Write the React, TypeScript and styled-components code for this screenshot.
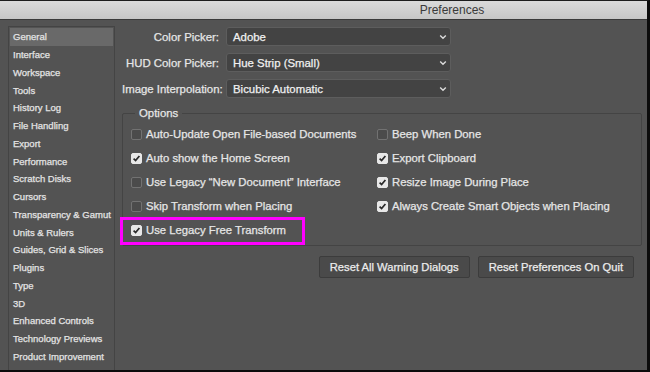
import React from "react";
import styled, { createGlobalStyle } from "styled-components";

const Global = createGlobalStyle`
  html, body { margin: 0; padding: 0; background: #111; }
  body {
    font-family: "Liberation Sans", Arial, sans-serif;
    -webkit-text-stroke: 0.25px currentColor;
  }
  * { box-sizing: border-box; }
`;

const Window = styled.div`
  width: 650px;
  height: 372px;
  display: flex;
  flex-direction: column;
  background: #535353;
  border-top: 1px solid #1c1c1c;
  border-right: 3px solid #0c0c0c;
  border-bottom: 2px solid #0c0c0c;
  overflow: hidden;
`;

const TitleBar = styled.div`
  height: 19px;
  flex: none;
  display: flex;
  align-items: center;
  justify-content: center;
  padding-left: 257px;
  background: linear-gradient(#dadada, #c6c6c6);
  border-bottom: 1px solid #3a3a3a;
  color: #3a3a3a;
  font-size: 12px;
  -webkit-text-stroke: 0;
`;

const Body = styled.div`
  flex: 1;
  display: flex;
  padding: 6px 0 0 8px;
  min-height: 0;
`;

const Sidebar = styled.div`
  width: 107px;
  flex: none;
  border: 1px solid #444;
  border-bottom: none;
  padding: 1px 1px 0 1px;
  display: flex;
  flex-direction: column;
`;

const NavItem = styled.div<{ $active?: boolean }>`
  height: 17.75px;
  flex: none;
  display: flex;
  align-items: center;
  padding-left: 3px;
  font-size: 9.5px;
  color: #e4e4e4;
  white-space: nowrap;
  background: ${(p) => (p.$active ? "#696969" : "transparent")};
`;

const Main = styled.div`
  flex: 1;
  padding: 1px 0 0 7px;
  display: flex;
  flex-direction: column;
`;

const Form = styled.div`
  display: grid;
  grid-template-columns: 97px 225px;
  column-gap: 7px;
  row-gap: 7px;
  align-items: center;
`;

const Label = styled.div`
  text-align: right;
  font-size: 11.4px;
  color: #e6e6e6;
  white-space: nowrap;
`;

const Select = styled.div`
  height: 19px;
  display: flex;
  align-items: center;
  justify-content: space-between;
  padding: 0 3px 0 6px;
  background: #434343;
  border: 1px solid #5d5d5d;
  border-radius: 3px;
  color: #f0f0f0;
  font-size: 11.4px;
`;

const Chevron = () => (
  <svg width="8" height="6" viewBox="0 0 8 6">
    <path d="M1.2 1.5 L4 4.2 L6.8 1.5" fill="none" stroke="#dcdcdc" strokeWidth="1.4" />
  </svg>
);

const Group = styled.fieldset`
  margin: 9px 5px 0 0;
  padding: 3px 0 3px 8px;
  border: 1px solid #444;
  border-radius: 2px;
  min-width: 0;
`;

const Legend = styled.legend`
  padding: 0 4px;
  margin-left: 4px;
  font-size: 11.4px;
  color: #e6e6e6;
`;

const Options = styled.div`
  display: grid;
  grid-template-columns: 246px auto;
  grid-auto-rows: 24px;
  align-items: center;
`;

const Row = styled.div<{ $highlight?: boolean }>`
  position: relative;
  justify-self: start;
  display: inline-flex;
  align-items: center;
  gap: 4px;
  height: 14px;
  font-size: 11.3px;
  color: #e6e6e6;
  white-space: nowrap;
  ${(p) =>
    p.$highlight &&
    `&::after {
      content: "";
      position: absolute;
      left: -11px;
      right: -19px;
      top: -6px;
      bottom: -8px;
      border: 3px solid #ff00ff;
    }`}
`;

const Box = styled.span<{ $checked?: boolean }>`
  width: 11px;
  height: 11px;
  flex: none;
  border-radius: 2px;
  display: flex;
  align-items: center;
  justify-content: center;
  background: ${(p) => (p.$checked ? "#e8e8e8" : "#4b4b4b")};
  border: 1px solid ${(p) => (p.$checked ? "#e8e8e8" : "#727272")};
`;

const Check = () => (
  <svg width="9" height="9" viewBox="0 0 9 9">
    <path d="M1.6 4.6 L3.6 6.6 L7.4 2" fill="none" stroke="#2a2a2a" strokeWidth="1.7" />
  </svg>
);

const Buttons = styled.div`
  display: flex;
  justify-content: flex-end;
  gap: 8px;
  margin: 10px 13px 0 0;
`;

const Button = styled.div`
  height: 22px;
  display: flex;
  align-items: center;
  justify-content: center;
  padding: 0 10px;
  background: #4a4a4a;
  border: 1px solid #3c3c3c;
  border-radius: 2px;
  color: #ececec;
  font-size: 11.2px;
`;

const nav = [
  "General",
  "Interface",
  "Workspace",
  "Tools",
  "History Log",
  "File Handling",
  "Export",
  "Performance",
  "Scratch Disks",
  "Cursors",
  "Transparency & Gamut",
  "Units & Rulers",
  "Guides, Grid & Slices",
  "Plugins",
  "Type",
  "3D",
  "Enhanced Controls",
  "Technology Previews",
  "Product Improvement",
];

const selects: [string, string][] = [
  ["Color Picker:", "Adobe"],
  ["HUD Color Picker:", "Hue Strip (Small)"],
  ["Image Interpolation:", "Bicubic Automatic"],
];

type Opt = { label: string; checked: boolean; highlight?: boolean } | null;

const options: Opt[] = [
  { label: "Auto-Update Open File-based Documents", checked: false },
  { label: "Beep When Done", checked: false },
  { label: "Auto show the Home Screen", checked: true },
  { label: "Export Clipboard", checked: true },
  { label: "Use Legacy \u201CNew Document\u201D Interface", checked: false },
  { label: "Resize Image During Place", checked: true },
  { label: "Skip Transform when Placing", checked: false },
  { label: "Always Create Smart Objects when Placing", checked: true },
  { label: "Use Legacy Free Transform", checked: true, highlight: true },
  null,
];

export default function App() {
  return (
    <>
      <Global />
      <Window>
        <TitleBar>Preferences</TitleBar>
        <Body>
          <Sidebar>
            {nav.map((n, i) => (
              <NavItem key={n} $active={i === 0}>
                {n}
              </NavItem>
            ))}
          </Sidebar>
          <Main>
            <Form>
              {selects.map(([l, v]) => (
                <React.Fragment key={l}>
                  <Label>{l}</Label>
                  <Select>
                    <span>{v}</span>
                    <Chevron />
                  </Select>
                </React.Fragment>
              ))}
            </Form>
            <Group>
              <Legend>Options</Legend>
              <Options>
                {options.map((o, i) =>
                  o ? (
                    <Row key={i} $highlight={o.highlight}>
                      <Box $checked={o.checked}>{o.checked && <Check />}</Box>
                      {o.label}
                    </Row>
                  ) : (
                    <span key={i} />
                  )
                )}
              </Options>
            </Group>
            <Buttons>
              <Button>Reset All Warning Dialogs</Button>
              <Button>Reset Preferences On Quit</Button>
            </Buttons>
          </Main>
        </Body>
      </Window>
    </>
  );
}
